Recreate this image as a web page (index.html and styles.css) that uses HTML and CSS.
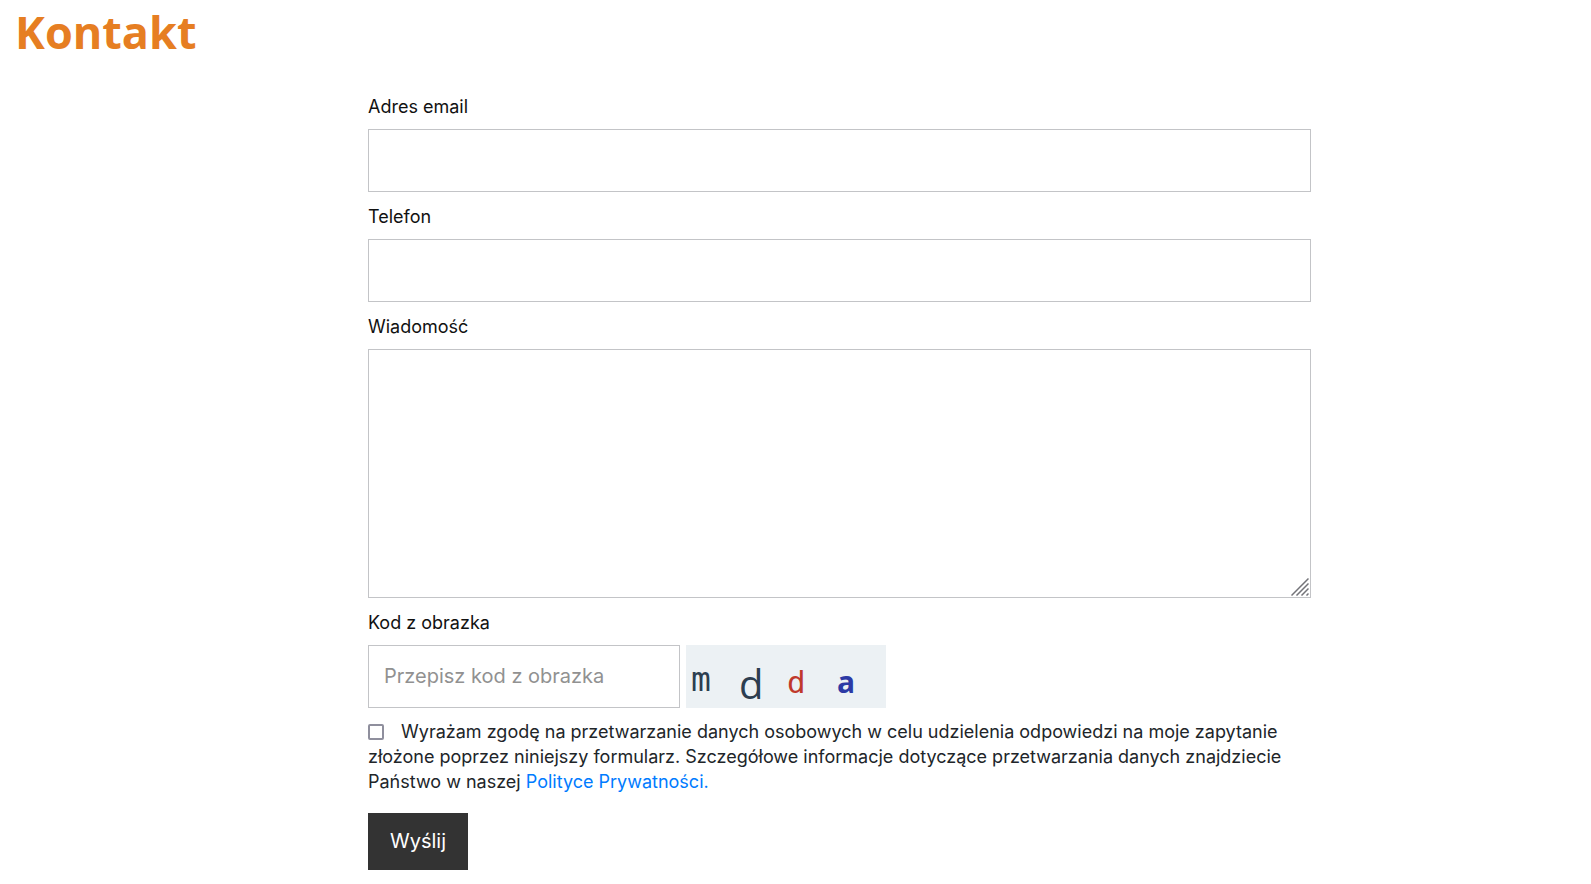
FILE: index.html
```
<!DOCTYPE html>
<html lang="pl">
<head>
<meta charset="utf-8">
<meta name="viewport" content="width=device-width, initial-scale=1">
<title>Kontakt</title>
<link rel="stylesheet" href="styles.css">
</head>
<body>
<main class="page">
  <h1 class="page-title">Kontakt</h1>
  <form class="contact-form" action="#" method="post">
    <label class="field-label" for="email">Adres email</label>
    <input class="field" id="email" name="email" type="email">

    <label class="field-label" for="phone">Telefon</label>
    <input class="field" id="phone" name="phone" type="tel">

    <label class="field-label" for="message">Wiadomość</label>
    <div class="message-box">
      <textarea class="field field-message" id="message" name="message"></textarea>
      <svg class="grip" viewBox="0 0 18 18" aria-hidden="true">
        <path d="M.5 17.5l17-17M5.500 17.500l12-12M10.500 17.500l7-7M15.500 17.500l2-2"/>
      </svg>
    </div>

    <label class="field-label" for="code">Kod z obrazka</label>
    <div class="captcha-row">
      <input class="field field-code" id="code" name="code" type="text" placeholder="Przepisz kod z obrazka">
      <svg class="captcha" viewBox="0 0 200 63" role="img" aria-label="Kod">
        <text class="glyph glyph-mono" x="5" y="46">m</text>
        <text class="glyph glyph-large" x="53" y="54">d</text>
        <text class="glyph glyph-red" x="101" y="48">d</text>
        <text class="glyph glyph-blue" x="151" y="48">a</text>
      </svg>
    </div>

    <div class="consent">
      <input class="consent-check" id="consent" name="consent" type="checkbox">
      <label for="consent">Wyrażam zgodę na przetwarzanie danych osobowych w celu udzielenia odpowiedzi na moje zapytanie złożone poprzez niniejszy formularz. Szczegółowe informacje dotyczące przetwarzania danych znajdziecie Państwo w naszej <a class="link" href="#">Polityce Prywatności.</a></label>
    </div>

    <button class="submit" type="submit">Wyślij</button>
  </form>
</main>
</body>
</html>
```
FILE: styles.css
```
* {
  box-sizing: border-box;
}

body {
  margin: 0;
  background: #fff;
  color: #212529;
  font-family: Inter, "Open Sans", sans-serif;
  font-size: 18px;
  line-height: 25px;
}

.page-title {
  margin: 0;
  padding: 3px 15px 21px;
  color: #e67e22;
  font-family: "Open Sans", sans-serif;
  font-size: 45px;
  font-weight: 700;
  line-height: 58px;
}

.contact-form {
  display: flex;
  flex-direction: column;
  align-items: stretch;
  margin: 0 17.6% 14px 23.13%;
}

.field-label {
  padding: 12px 0 10px;
  color: #111;
}

.field {
  width: 100%;
  height: 63px;
  margin: 0;
  padding: 0 15px 2px;
  border: 1px solid #c3c4c7;
  border-radius: 0;
  background: #fff;
  color: #212529;
  font: inherit;
  font-size: 20px;
}

.field::placeholder {
  color: #919191;
  opacity: 1;
}

.message-box {
  position: relative;
  display: flex;
}

.field-message {
  height: 249px;
  padding: 15px;
  resize: none;
}

.grip {
  position: absolute;
  right: 2px;
  bottom: 2px;
  width: 18px;
  height: 18px;
  fill: none;
  stroke: #747479;
  stroke-width: 1.5;
  pointer-events: none;
}

.captcha-row {
  display: flex;
  gap: 6px;
}

.field-code {
  width: 312px;
}

.captcha {
  width: 200px;
  height: 63px;
  overflow: visible;
  background: #ecf1f4;
}

.glyph {
  fill: #2c3e50;
  font-family: "Open Sans", sans-serif;
}

.glyph-mono {
  font-family: "DejaVu Sans Mono", monospace;
  font-size: 33px;
}

.glyph-large {
  font-size: 40px;
}

.glyph-red {
  fill: #c0392b;
  font-family: "DejaVu Sans Mono", monospace;
  font-size: 31px;
}

.glyph-blue {
  fill: #2c3aa5;
  font-size: 30px;
  font-weight: 700;
}

.consent {
  margin: 11px 0 19px;
}

.consent-check {
  appearance: none;
  width: 16px;
  height: 16px;
  margin: 0 12px 0 0;
  border: 2px solid #8f8f9d;
  border-radius: 2px;
  background: #fff;
  vertical-align: -2px;
}

.consent-check:checked {
  background: #0a7cff;
}

.link {
  color: #007bff;
  text-decoration: none;
}

.submit {
  align-self: flex-start;
  min-width: 100px;
  padding: 16px 20px;
  border: 0;
  background: #333;
  color: #fff;
  font: inherit;
  font-size: 20px;
}
```
